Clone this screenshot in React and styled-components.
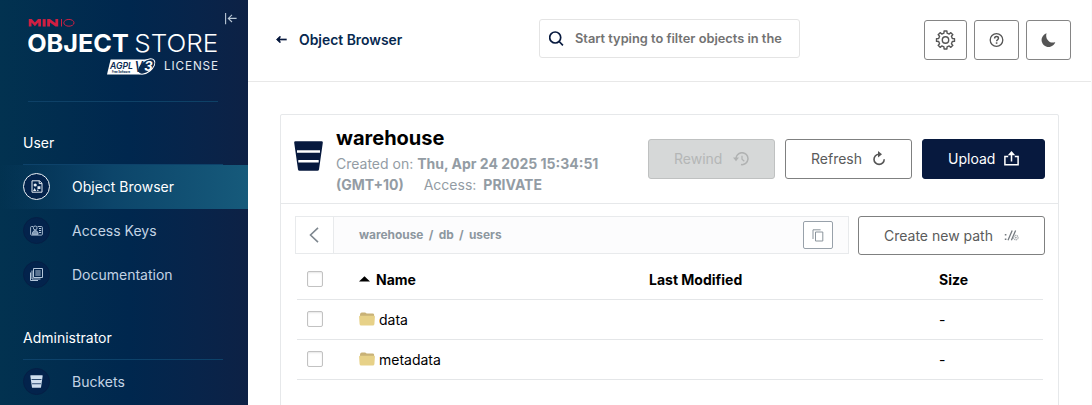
import React from "react";
import styled, { createGlobalStyle, css } from "styled-components";

const GlobalStyle = createGlobalStyle`
  *, *::before, *::after { box-sizing: border-box; }
  html, body { margin: 0; padding: 0; background: #fff; overflow: hidden; }
  body { font-family: Inter, "Liberation Sans", sans-serif; font-size: 14px; color: #000; }
  svg { display: block; flex: none; }
  button { font-family: inherit; margin: 0; }
`;

const Page = styled.div`
  display: flex;
  width: 1092px;
  height: 405px;
  overflow: hidden;
`;

/* ---------- sidebar ---------- */
const Sidebar = styled.nav`
  flex: none;
  width: 248px;
  height: 405px;
  background: linear-gradient(90deg, #023250 0%, #00274e 52%, #08244a 80%, #0d2145 100%);
`;
const Brand = styled.div`
  position: relative;
  height: 102px;
  margin: 0 30px 0 28px;
  border-bottom: 1px solid #0e4167;
`;
const CollapseButton = styled.button`
  position: absolute;
  left: 196px;
  top: 12px;
  border: 0;
  padding: 0;
  background: none;
`;
const MenuHeading = styled.div`
  display: flex;
  align-items: center;
  height: ${(p) => p.$height}px;
  margin: ${(p) => p.$top}px 25px 0 23px;
  border-bottom: 1px solid #0d426a;
  color: #fff;
  font-size: 14px;
`;
const MenuItem = styled.a`
  display: flex;
  align-items: center;
  height: 44px;
  padding: 0 0 1px 23px;
  gap: 22px;
  color: #c3d3e4;
  font-size: 14px;
  ${(p) =>
    p.$active &&
    css`
      color: #fff;
      background: linear-gradient(90deg, rgba(20, 88, 120, 0) 0%, #0c456a 45%, #165a7b 100%);
    `}
`;
const IconDisc = styled.span`
  display: flex;
  align-items: center;
  justify-content: center;
  width: 27px;
  height: 27px;
  border-radius: 50%;
  background: #03234c;
  border: 1px solid ${(p) => (p.$active ? "#eef3f7" : "#051f45")};
`;

/* ---------- main ---------- */
const Main = styled.main`
  flex: 1;
  min-width: 0;
  border-right: 1px solid #fafafa;
`;
const TopBar = styled.header`
  display: flex;
  height: 82px;
  padding: 19px 20px 0 28px;
  border-bottom: 1px solid #e8e8e8;
`;
const BackLink = styled.a`
  display: flex;
  align-items: center;
  gap: 12px;
  width: 263px;
  height: 41px;
  color: #07284f;
  font-size: 13.9px;
  font-weight: 600;
`;
const Search = styled.div`
  display: flex;
  align-items: center;
  gap: 11px;
  width: 261px;
  height: 39px;
  padding: 0 0 1px 9px;
  border: 1px solid #e4e4e4;
  border-radius: 3px;
  color: #727272;
  font-size: 12.8px;
  font-weight: 600;
  white-space: nowrap;
`;
const Tools = styled.div`
  display: flex;
  gap: 7px;
  margin-left: auto;
  padding-top: 1px;
`;
const ToolButton = styled.button`
  display: flex;
  align-items: center;
  justify-content: center;
  width: ${(p) => p.$width || 45}px;
  height: 40px;
  padding: 0;
  border: 1px solid #858585;
  border-radius: 3px;
  background: #fff;
`;
const Card = styled.section`
  width: 779px;
  height: 300px;
  margin: 32px 0 0 32px;
  border: 1px solid #e6e8ea;
  border-radius: 2px 2px 0 0;
`;
const CardHeader = styled.div`
  display: flex;
  height: 89px;
  padding-left: 13px;
  padding-right: 13px;
  border-bottom: 1px solid #e6e8ea;
`;
const BucketMark = styled.div`
  padding-top: 26px;
  width: 42px;
`;
const Info = styled.div`
  flex: 1;
  padding-top: 10px;
`;
const Title = styled.h1`
  margin: 0 0 2px;
  font-size: 20px;
  line-height: 26px;
  font-weight: 700;
`;
const Meta = styled.div`
  display: flex;
  height: 21px;
  align-items: center;
  color: #939ca4;
  font-size: 14px;
  white-space: pre;
  b { font-weight: 700; }
`;
const Spacer = styled.span`
  width: ${(p) => p.$width}px;
`;
const Actions = styled.div`
  display: flex;
  gap: 10px;
  padding-top: 24px;
`;
const Button = styled.button`
  display: flex;
  align-items: center;
  justify-content: space-between;
  width: ${(p) => p.$width}px;
  height: ${(p) => p.$height || 40}px;
  padding: 0 25px 1px;
  font-size: 14px;
  border-radius: 3px;
  white-space: nowrap;
  border: 1px solid #7f8080;
  background: #fff;
  color: #5a5b5b;
  ${(p) =>
    p.$kind === "disabled" &&
    css`
      border-color: #bfc1c1;
      background: #d6d8d8;
      color: #b4b6b6;
    `}
  ${(p) =>
    p.$kind === "primary" &&
    css`
      border-color: #07193e;
      background: #07193e;
      color: #fff;
    `}
`;
const PathRow = styled.div`
  display: flex;
  gap: 9px;
  padding: 12px 13px 0 14px;
`;
const PathBar = styled.div`
  display: flex;
  align-items: center;
  width: 554px;
  height: 38px;
  border: 1px solid #e8eaec;
  background: #fcfcfd;
`;
const BackCell = styled.button`
  display: flex;
  align-items: center;
  justify-content: center;
  width: 38px;
  height: 36px;
  padding: 0 1px 0 0;
  border: 0;
  border-right: 1px solid #e8eaec;
  background: #fff;
`;
const Crumbs = styled.div`
  flex: 1;
  padding: 0 0 1px 25px;
  color: #8d979f;
  font-size: 11.9px;
  font-weight: 700;
  word-spacing: 2.5px;
`;
const CopyButton = styled.button`
  display: flex;
  align-items: center;
  justify-content: center;
  width: 30px;
  height: 28px;
  margin-right: 15px;
  padding: 0;
  border: 1px solid #98a1aa;
  border-radius: 2px;
  background: #fff;
`;
const Table = styled.div`
  margin: 5px 15px 0 16px;
`;
const Row = styled.div`
  display: grid;
  grid-template-columns: 62px 290px 290px 1fr;
  align-items: center;
  height: 40px;
  padding-bottom: 1px;
  border-bottom: 1px solid #e4e6e8;
  font-size: 14px;
  font-weight: ${(p) => (p.$head ? 700 : 400)};
`;
const Checkbox = styled.span`
  display: block;
  width: 16px;
  height: 16px;
  margin-left: 10px;
  border: 1px solid #c2c2c2;
  border-radius: 2px;
  background: #fff;
  box-shadow: inset 0 1px 2px rgba(0, 0, 0, 0.1);
`;
const NameCell = styled.span`
  display: flex;
  align-items: center;
  gap: ${(p) => p.$gap}px;
`;

/* ---------- drawings ---------- */
const Logo = () => (
  <svg width="190" height="82" viewBox="28 0 190 82" fontFamily="Inter, sans-serif">
    <g fill="#d01f42" stroke="none">
      <path d="M28.8 26.600v-7.500h3l3.100 3.400 3.100-3.400h3v7.500h-2.700v-4l-3.400 3.700-3.400-3.700v4z" />
      <path d="M42.700 19.100h3v7.500h-3z" />
      <path d="M47.200 26.600v-7.500h2.800l5.400 3.900v-3.900h2.800v7.500h-2.700l-5.500-4v4z" />
      <path d="M61 19.100h1v7.500h-1z" />
      <ellipse cx="68.900" cy="22.800" rx="5.100" ry="3.400" fill="none" stroke="#d01f42" strokeWidth="1" />
    </g>
    <text x="27.2" y="52.300" fontSize="24.800" fontWeight="700" fill="#fff" textLength="101.500" lengthAdjust="spacingAndGlyphs">OBJECT</text>
    <text x="134.200" y="52.300" fontSize="24.800" fontWeight="300" fill="#fff" textLength="84" lengthAdjust="spacingAndGlyphs">STORE</text>
    <path d="M110.600 59.400H148l-7.600 15H107z" fill="#fff" />
    <text x="110" y="68.800" fontSize="9.500" fontStyle="italic" fontWeight="600" fill="#0b2c52" textLength="23" lengthAdjust="spacingAndGlyphs">AGPL</text>
    <text x="112" y="73.300" fontSize="3.400" fontWeight="700" fill="#0b2c52" textLength="18" lengthAdjust="spacingAndGlyphs">Free Software</text>
    <ellipse cx="146.300" cy="66.500" rx="10" ry="5.700" transform="rotate(-38 146.300 66.500)" fill="#0b2c52" stroke="#fff" strokeWidth="1" />
    <text x="134.800" y="71.800" fontSize="14" fontStyle="italic" fontWeight="600" fill="#0b2c52" textLength="8.200" lengthAdjust="spacingAndGlyphs">V</text>
    <text x="144.200" y="71.400" fontSize="13" fontStyle="italic" fontWeight="700" fill="#fff">3</text>
    <text x="164" y="70.300" fontSize="11.700" fill="#e4eaf1" textLength="54" lengthAdjust="spacing">LICENSE</text>
  </svg>
);
const CollapseIcon = () => (
  <svg width="14" height="13" viewBox="0 0 14 13" fill="none" stroke="#b9c7d5" strokeWidth="1.100">
    <path d="M1.600 1v11.200M12.600 6.400H4.400M8 2.800L4.300 6.400 8 10" />
  </svg>
);
const ObjectIcon = () => (
  <svg width="12" height="13" viewBox="0 0 12 13" fill="none" stroke="#e6edf3" strokeWidth="1">
    <path d="M1 .8h7.600L11 3.200v9H1zM8.200.9v2.700h2.700" />
    <g fill="#e6edf3" stroke="none">
      <circle cx="4.200" cy="5" r="1.600" />
      <path d="M6.500 6.200h2.900v2.700H6.500zM3.600 8l1.700 2.900H2z" />
      <circle cx="6.800" cy="10.300" r=".8" />
    </g>
  </svg>
);
const KeysIcon = () => (
  <svg width="13" height="11" viewBox="0 0 13 11" fill="none" stroke="#b4c6da" strokeWidth="0.900">
    <path d="M3 1.500H1.600a1 1 0 0 0-1 1v6.600a1 1 0 0 0 1 1h9.800a1 1 0 0 0 1-1V2.500a1 1 0 0 0-1-1H7.700" />
    <circle cx="5.200" cy="2.900" r="1.900" />
    <path d="M2.300 9.300c0-2.400 1.200-3.700 2.900-3.700s2.900 1.300 2.900 3.700z" fill="#7e97b3" />
    <path d="M9 3.500h2.200M9 5.500h2.200M9 7.500h2.200" strokeWidth="1.200" />
  </svg>
);
const DocsIcon = () => (
  <svg width="14" height="13" viewBox="0 0 14 13" fill="none" stroke="#b4c6da" strokeWidth="1">
    <path d="M3.500.500h9v9h-9zM2 2.500v8.500h8.500M.500 4.500v8h7.500M5.300 3h5.400M5.300 5h5.400M5.300 7h5.400" />
  </svg>
);
const BucketIcon = ({ width, height, color, line }) => (
  <svg width={width} height={height} viewBox="0 0 29 30">
    <path d="M1.500.3h26a1.300 1.300 0 0 1 1.300 1.500L25 28.400a1.600 1.600 0 0 1-1.600 1.300H5.600A1.600 1.600 0 0 1 4 28.400L.2 1.800A1.300 1.300 0 0 1 1.500.3z" fill={color} />
    <path d="M3 9.300h23v2.400H3zM4.300 19h20.400v2.400H4.300z" fill={line} />
  </svg>
);
const ArrowLeft = () => (
  <svg width="11" height="9" viewBox="0 0 11 9" fill="none" stroke="#07193e" strokeWidth="1.700">
    <path d="M10.700 4.500H2" />
    <path d="M4.800 1L.3 4.500 4.800 8 3.700 4.500z" fill="#07193e" stroke="none" />
    <path d="M4.200 1.500L1.200 4.500l3 3" strokeWidth="1.400" />
  </svg>
);
const SearchIcon = () => (
  <svg width="15" height="15" viewBox="0 0 15 15" fill="none" stroke="#07193e" strokeWidth="1.700">
    <circle cx="6.200" cy="6.500" r="5.500" />
    <path d="M10.200 10.500l3.700 3.800" />
  </svg>
);
const teeth = [0, 45, 90, 135, 180, 225, 270, 315];
const gearPath = (() => {
  const at = (deg, r) => {
    const a = (deg * Math.PI) / 180;
    return `${(10 + r * Math.cos(a)).toFixed(2)} ${(10 + r * Math.sin(a)).toFixed(2)}`;
  };
  return (
    "M" +
    teeth.map((t) => [at(t - 13, 7), at(t - 9, 9.1), at(t + 9, 9.1), at(t + 13, 7)].join("L")).join("L") +
    "z"
  );
})();
const GearIcon = () => (
  <svg width="21" height="20" viewBox="0 0 20 20" fill="none" stroke="#555" strokeWidth="1.400" strokeLinejoin="round">
    <path d={gearPath} />
    <circle cx="10" cy="10" r="3.200" />
  </svg>
);
const HelpIcon = () => (
  <svg width="15" height="14" viewBox="0 0 14 14" fill="none" stroke="#555" strokeWidth="1.300">
    <circle cx="7" cy="7" r="6.300" />
    <path d="M5.100 5.500c0-1.200.8-1.900 1.950-1.900s1.900.7 1.900 1.700c0 1.400-1.800 1.500-1.800 3" strokeWidth="1.500" />
    <path d="M6.300 9.300h1.600v1.500H6.300z" fill="#555" stroke="none" />
  </svg>
);
const MoonIcon = () => (
  <svg width="15" height="14" viewBox="0 0 15 14">
    <path d="M5.600.3A7 7 0 1 0 14.300 9C9.200 11.400 3.600 5.800 5.600.3z" fill="#555" />
  </svg>
);
const RewindIcon = () => (
  <svg width="16" height="14" viewBox="0 0 16 14" fill="none" stroke="#b0b2b2" strokeWidth="1.500">
    <path d="M3 7.200a6 6 0 1 1 5 5.400" />
    <path d="M0 5.500h6L3 9.200z" fill="#b0b2b2" stroke="none" />
    <path d="M9 3.700v3.500l2.300 2" strokeWidth="1.200" />
  </svg>
);
const RefreshIcon = () => (
  <svg width="14" height="15" viewBox="0 0 14 15" fill="none" stroke="#555" strokeWidth="1.600">
    <path d="M7 3.200A5.100 5.100 0 1 0 12.200 8.300" />
    <path d="M6 0l4 3.200-4 3.200z" fill="#555" stroke="none" />
  </svg>
);
const UploadIcon = () => (
  <svg width="15" height="15" viewBox="0 0 15 15" fill="none" stroke="#fff" strokeWidth="1.500">
    <path d="M4.200 5.600H.9v8.200h13.200V5.600h-3.300M7.500 10.500V2" />
    <path d="M7.500 0l3.700 4.200H3.800z" fill="#fff" stroke="none" />
  </svg>
);
const ChevronLeft = () => (
  <svg width="10" height="16" viewBox="0 0 10 16" fill="none" stroke="#7e878f" strokeWidth="1.600">
    <path d="M9 .8L1.500 8 9 15.200" />
  </svg>
);
const CopyIcon = () => (
  <svg width="12" height="13" viewBox="0 0 12 13" fill="none" stroke="#8b949c" strokeWidth="1">
    <path d="M3.500 3h7.300v9H3.500zM1 10V.8h7.600" />
  </svg>
);
const PathIcon = () => (
  <svg width="15" height="11" viewBox="0 0 15 11" fill="none" stroke="#757b80" strokeWidth="1.300">
    <path d="M.8 4h1.600v1.600H.8zM.8 8.500h1.600v1.600H.8z" fill="#757b80" stroke="none" />
    <path d="M4 10.200L8.200.6M7.400 10.200L11.600.6" />
    <circle cx="11.800" cy="7.600" r="2.300" strokeDasharray="1.300 .5" stroke="#a4a9ad" strokeWidth="1.100" />
    <path d="M10.800 7.600h2M11.800 6.600v2" strokeWidth=".5" />
  </svg>
);
const SortIcon = () => (
  <svg width="11" height="6" viewBox="0 0 11 6">
    <path d="M0 5.600L5.500.2 11 5.600z" fill="#000" />
  </svg>
);
const FolderIcon = () => (
  <svg width="16" height="14" viewBox="0 0 16 14">
    <path d="M1 2.400Q1.200.4 2.800.4h3.400L7.700 1.400h6q1.400 0 1.400 1.400V6H1z" fill="#c9b277" />
    <path d="M1 3.700h14q1 0 .9 1l-.5 7.300q-.1 1.600-1.600 1.600H2.200q-1.500 0-1.600-1.600L.1 4.700q-.1-1 .9-1z" fill="#e7d188" />
  </svg>
);

const files = ["data", "metadata"];

export default function App() {
  return (
    <Page>
      <GlobalStyle />
      <Sidebar>
        <Brand>
          <Logo />
          <CollapseButton aria-label="Collapse menu"><CollapseIcon /></CollapseButton>
        </Brand>
        <MenuHeading $height={45} $top={18}>User</MenuHeading>
        <MenuItem $active><IconDisc $active><ObjectIcon /></IconDisc>Object Browser</MenuItem>
        <MenuItem><IconDisc><KeysIcon /></IconDisc>Access Keys</MenuItem>
        <MenuItem><IconDisc><DocsIcon /></IconDisc>Documentation</MenuItem>
        <MenuHeading $height={45} $top={18}>Administrator</MenuHeading>
        <MenuItem>
          <IconDisc><BucketIcon width={13} height={13} color="#cfdeee" line="#2d4a70" /></IconDisc>
          Buckets
        </MenuItem>
      </Sidebar>
      <Main>
        <TopBar>
          <BackLink><ArrowLeft />Object Browser</BackLink>
          <Search><SearchIcon />Start typing to filter objects in the</Search>
          <Tools>
            <ToolButton $width={43}><GearIcon /></ToolButton>
            <ToolButton><HelpIcon /></ToolButton>
            <ToolButton><MoonIcon /></ToolButton>
          </Tools>
        </TopBar>
        <Card>
          <CardHeader>
            <BucketMark><BucketIcon width={29} height={30} color="#07193e" line="#fff" /></BucketMark>
            <Info>
              <Title>warehouse</Title>
              <Meta>Created on: <b>Thu, Apr 24 2025 15:34:51</b></Meta>
              <Meta><b>(GMT+10)</b><Spacer $width={20} />Access:<Spacer $width={7} /><b>PRIVATE</b></Meta>
            </Info>
            <Actions>
              <Button $width={127} $kind="disabled">Rewind<RewindIcon /></Button>
              <Button $width={127}>Refresh<RefreshIcon /></Button>
              <Button $width={123} $kind="primary">Upload<UploadIcon /></Button>
            </Actions>
          </CardHeader>
          <PathRow>
            <PathBar>
              <BackCell><ChevronLeft /></BackCell>
              <Crumbs>warehouse / db / users</Crumbs>
              <CopyButton><CopyIcon /></CopyButton>
            </PathBar>
            <Button $width={187} $height={39}>Create new path<PathIcon /></Button>
          </PathRow>
          <Table>
            <Row $head>
              <Checkbox />
              <NameCell $gap={6}><SortIcon />Name</NameCell>
              <span>Last Modified</span>
              <span>Size</span>
            </Row>
            {files.map((name) => (
              <Row key={name}>
                <Checkbox />
                <NameCell $gap={4}><FolderIcon />{name}</NameCell>
                <span />
                <span>-</span>
              </Row>
            ))}
          </Table>
        </Card>
      </Main>
    </Page>
  );
}
